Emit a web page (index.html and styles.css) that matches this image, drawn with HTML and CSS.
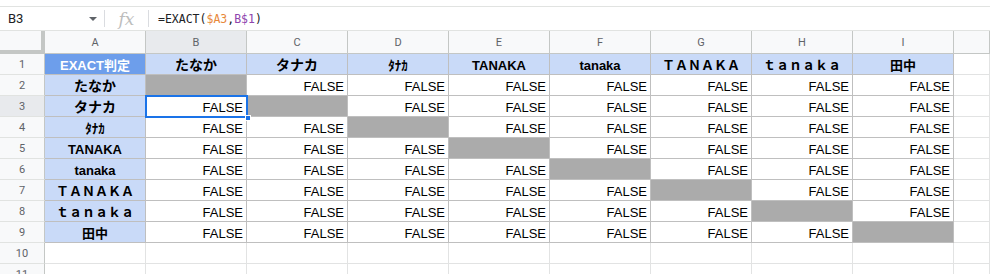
FILE: index.html
```html
<!DOCTYPE html>
<html lang="ja">
<head>
    <meta charset="UTF-8">
    <meta name="viewport" content="width=device-width, initial-scale=1.0">
    <title>EXACT判定</title>
    <link rel="stylesheet" href="styles.css">
</head>
<body>
    <div class="formula-bar">
        <div class="name-box">
            <span class="ref">B3</span>
            <span class="caret"></span>
        </div>
        <div class="divider"></div>
        <div class="fx">fx</div>
        <div class="divider"></div>
        <div class="formula">=EXACT(<span class="ref1">$A3</span>,<span class="ref2">B$1</span>)</div>
    </div>

    <div class="sheet">
        <div class="corner"></div>
        <div class="col-head">A</div>
        <div class="col-head sel-head">B</div>
        <div class="col-head">C</div>
        <div class="col-head">D</div>
        <div class="col-head">E</div>
        <div class="col-head">F</div>
        <div class="col-head">G</div>
        <div class="col-head">H</div>
        <div class="col-head">I</div>
        <div class="col-head"></div>

        <div class="row-head">1</div>
        <div class="cell box title">EXACT判定</div>
        <div class="cell box top kana">たなか</div>
        <div class="cell box top kana">タナカ</div>
        <div class="cell box top">ﾀﾅｶ</div>
        <div class="cell box top">TANAKA</div>
        <div class="cell box top">tanaka</div>
        <div class="cell box top">ＴＡＮＡＫＡ</div>
        <div class="cell box top">ｔａｎａｋａ</div>
        <div class="cell box top">田中</div>
        <div class="cell"></div>

        <div class="row-head">2</div>
        <div class="cell box side kana">たなか</div>
        <div class="cell box off"></div>
        <div class="cell box val">FALSE</div>
        <div class="cell box val">FALSE</div>
        <div class="cell box val">FALSE</div>
        <div class="cell box val">FALSE</div>
        <div class="cell box val">FALSE</div>
        <div class="cell box val">FALSE</div>
        <div class="cell box val">FALSE</div>
        <div class="cell"></div>

        <div class="row-head sel-head">3</div>
        <div class="cell box side kana">タナカ</div>
        <div class="cell box val selected">FALSE<span class="handle"></span></div>
        <div class="cell box off"></div>
        <div class="cell box val">FALSE</div>
        <div class="cell box val">FALSE</div>
        <div class="cell box val">FALSE</div>
        <div class="cell box val">FALSE</div>
        <div class="cell box val">FALSE</div>
        <div class="cell box val">FALSE</div>
        <div class="cell"></div>

        <div class="row-head">4</div>
        <div class="cell box side">ﾀﾅｶ</div>
        <div class="cell box val">FALSE</div>
        <div class="cell box val">FALSE</div>
        <div class="cell box off"></div>
        <div class="cell box val">FALSE</div>
        <div class="cell box val">FALSE</div>
        <div class="cell box val">FALSE</div>
        <div class="cell box val">FALSE</div>
        <div class="cell box val">FALSE</div>
        <div class="cell"></div>

        <div class="row-head">5</div>
        <div class="cell box side">TANAKA</div>
        <div class="cell box val">FALSE</div>
        <div class="cell box val">FALSE</div>
        <div class="cell box val">FALSE</div>
        <div class="cell box off"></div>
        <div class="cell box val">FALSE</div>
        <div class="cell box val">FALSE</div>
        <div class="cell box val">FALSE</div>
        <div class="cell box val">FALSE</div>
        <div class="cell"></div>

        <div class="row-head">6</div>
        <div class="cell box side">tanaka</div>
        <div class="cell box val">FALSE</div>
        <div class="cell box val">FALSE</div>
        <div class="cell box val">FALSE</div>
        <div class="cell box val">FALSE</div>
        <div class="cell box off"></div>
        <div class="cell box val">FALSE</div>
        <div class="cell box val">FALSE</div>
        <div class="cell box val">FALSE</div>
        <div class="cell"></div>

        <div class="row-head">7</div>
        <div class="cell box side">ＴＡＮＡＫＡ</div>
        <div class="cell box val">FALSE</div>
        <div class="cell box val">FALSE</div>
        <div class="cell box val">FALSE</div>
        <div class="cell box val">FALSE</div>
        <div class="cell box val">FALSE</div>
        <div class="cell box off"></div>
        <div class="cell box val">FALSE</div>
        <div class="cell box val">FALSE</div>
        <div class="cell"></div>

        <div class="row-head">8</div>
        <div class="cell box side">ｔａｎａｋａ</div>
        <div class="cell box val">FALSE</div>
        <div class="cell box val">FALSE</div>
        <div class="cell box val">FALSE</div>
        <div class="cell box val">FALSE</div>
        <div class="cell box val">FALSE</div>
        <div class="cell box val">FALSE</div>
        <div class="cell box off"></div>
        <div class="cell box val">FALSE</div>
        <div class="cell"></div>

        <div class="row-head">9</div>
        <div class="cell box side">田中</div>
        <div class="cell box val">FALSE</div>
        <div class="cell box val">FALSE</div>
        <div class="cell box val">FALSE</div>
        <div class="cell box val">FALSE</div>
        <div class="cell box val">FALSE</div>
        <div class="cell box val">FALSE</div>
        <div class="cell box val">FALSE</div>
        <div class="cell box off"></div>
        <div class="cell"></div>

        <div class="row-head">10</div>
        <div class="cell"></div>
        <div class="cell"></div>
        <div class="cell"></div>
        <div class="cell"></div>
        <div class="cell"></div>
        <div class="cell"></div>
        <div class="cell"></div>
        <div class="cell"></div>
        <div class="cell"></div>
        <div class="cell"></div>

        <div class="row-head">11</div>
        <div class="cell"></div>
        <div class="cell"></div>
        <div class="cell"></div>
        <div class="cell"></div>
        <div class="cell"></div>
        <div class="cell"></div>
        <div class="cell"></div>
        <div class="cell"></div>
        <div class="cell"></div>
        <div class="cell"></div>
    </div>
</body>
</html>
```

FILE: styles.css
```css
body {
    margin: 0;
    height: 274px;
    overflow: hidden;
    background: #fff;
    color: #000;
    font-family: "Liberation Sans", Arial, "Noto Sans CJK JP", sans-serif;
}

/* formula bar */
.formula-bar {
    margin-top: 6px;
    height: 25px;
    box-sizing: border-box;
    border-top: 1px solid #e1e3e1;
    border-bottom: 1px solid #e1e3e1;
    display: flex;
    align-items: center;
}
.name-box {
    width: 104px;
    box-sizing: border-box;
    padding-left: 8px;
    display: flex;
    align-items: center;
    font-family: Roboto, "Liberation Sans", sans-serif;
    font-size: 13px;
    color: #202124;
}
.name-box .ref {
    flex: 1;
}
.caret {
    width: 0;
    height: 0;
    border-left: 4px solid transparent;
    border-right: 4px solid transparent;
    border-top: 4px solid #5f6368;
    margin-right: 7px;
}
.divider {
    width: 1px;
    height: 17px;
    background: #dadce0;
}
.fx {
    width: 43px;
    text-align: center;
    font-family: "DejaVu Serif", "Liberation Serif", serif;
    font-style: italic;
    font-size: 17px;
    line-height: 22px;
    color: #bdbdbd;
}
.formula {
    padding-left: 9px;
    font-family: "DejaVu Sans Mono", monospace;
    font-size: 11.5px;
    color: #202124;
}
.ref1 {
    color: #e8883a;
}
.ref2 {
    color: #8e44ad;
}

/* grid */
.sheet {
    display: grid;
    grid-template-columns: 45px repeat(9, 101px) 1fr;
    grid-template-rows: 23px;
    grid-auto-rows: 21px;
}
.sheet > div {
    box-sizing: border-box;
    min-width: 0;
}
.corner {
    background: #f8f9fa;
    border-right: 4px solid #c4c7c5;
    border-bottom: 4px solid #c4c7c5;
}
.col-head,
.row-head {
    background: #f8f9fa;
    color: #5f6368;
    font-family: Roboto, "Liberation Sans", sans-serif;
    font-size: 11px;
    display: flex;
    align-items: center;
    justify-content: center;
    border-right: 1px solid #c4c7c5;
    border-bottom: 1px solid #c4c7c5;
}
.row-head {
    border-bottom-color: #e1e3e1;
}
.sel-head {
    background: #e8eaed;
}
.cell {
    border-right: 1px solid #e2e3e3;
    border-bottom: 1px solid #e2e3e3;
    font-size: 13px;
    line-height: 17px;
    display: flex;
    align-items: flex-end;
    white-space: nowrap;
    overflow: hidden;
}
.cell.box {
    border-right-color: #bfbfbf;
    border-bottom-color: #bfbfbf;
}
.title {
    background: #6d9eeb;
    color: #fff;
    font-weight: bold;
    justify-content: center;
}
.top,
.side {
    background: #c9daf8;
    font-weight: bold;
    justify-content: center;
}
.kana {
    font-size: 14px;
}
.val {
    justify-content: flex-end;
    padding-right: 3px;
}
.off {
    background: #ababab;
}
.selected {
    position: relative;
    overflow: visible;
    z-index: 2;
    outline: 2px solid #1a73e8;
    outline-offset: -1px;
}
.handle {
    position: absolute;
    right: -5px;
    bottom: -5px;
    width: 6px;
    height: 6px;
    box-sizing: border-box;
    background: #1a73e8;
    border: 1px solid #fff;
}
```
